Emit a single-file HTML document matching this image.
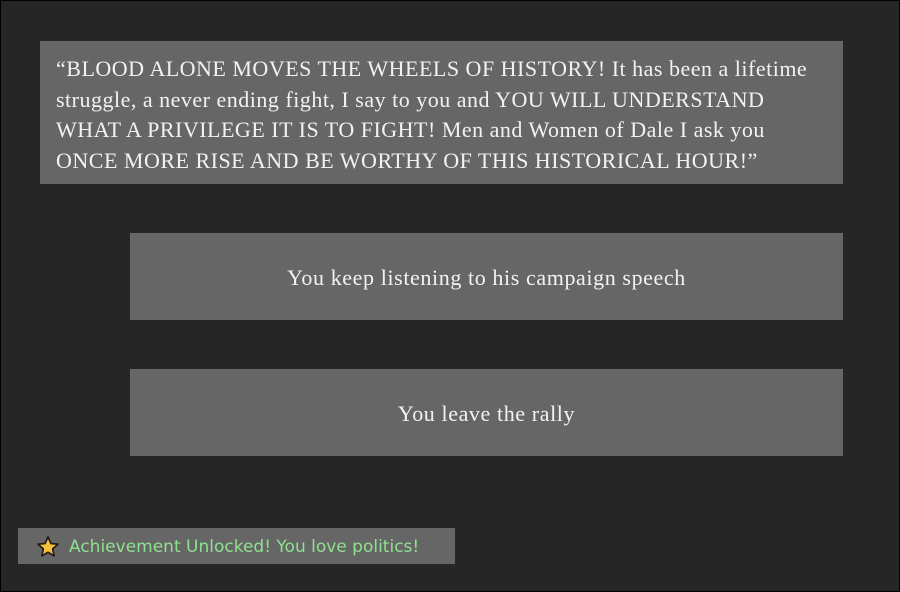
<!DOCTYPE html>
<html><head><meta charset="utf-8"><style>
html,body{margin:0;padding:0}
body{width:898px;height:590px;background:#262626;border:1px solid #000;position:relative;overflow:hidden;font-family:"Liberation Serif",serif;color:#f2f2f2}
.q{position:absolute;left:39px;top:40px;width:803px;height:143px;background:#666;box-sizing:border-box;padding:13px 16px;font-size:22px;line-height:30.5px;white-space:nowrap;letter-spacing:0.5px}
.b{position:absolute;left:129px;width:713px;height:87px;background:#666;font-size:22px;letter-spacing:0.6px;display:flex;align-items:center;justify-content:center;padding-top:2px;box-sizing:border-box}
.a{position:absolute;left:17px;top:527px;width:437px;height:36px;background:#666;font-family:"DejaVu Sans",sans-serif;font-size:17px;color:#8fe08f;display:flex;align-items:center;padding-top:2px;box-sizing:border-box}
</style></head><body>
<div class="q">“BLOOD ALONE MOVES THE WHEELS OF HISTORY! It has been a lifetime<br>struggle, a never ending fight, I say to you and YOU WILL UNDERSTAND<br>WHAT A PRIVILEGE IT IS TO FIGHT! Men and Women of Dale I ask you<br>ONCE MORE RISE AND BE WORTHY OF THIS HISTORICAL HOUR!”</div>
<div class="b" style="top:232px">You keep listening to his campaign speech</div>
<div class="b" style="top:368px">You leave the rally</div>
<div class="a"><svg width="24" height="24" viewBox="0 0 24 24" style="margin-left:18px;margin-right:9px"><path d="M12 2l2.9 6.6 7.1.6-5.4 4.7 1.6 7L12 17.2 5.8 20.9l1.6-7L2 9.2l7.1-.6z" fill="#f7c23a" stroke="#1a1a1a" stroke-width="1.6" stroke-linejoin="round"/></svg>Achievement Unlocked! You love politics!</div>
</body></html>
